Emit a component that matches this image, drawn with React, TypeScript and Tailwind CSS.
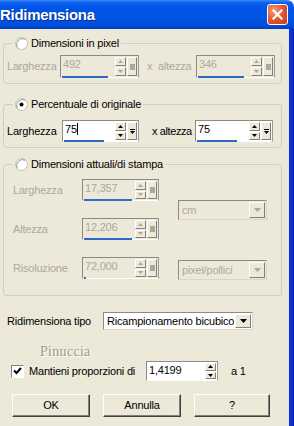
import React from "react";

const FONT = "font-['Liberation_Sans',Arial,sans-serif] text-[11px] tracking-[-0.2px] leading-none whitespace-nowrap";

function Tri({ up, color }: { up?: boolean; color: string }) {
  return (
    <svg width="5" height="3" viewBox="0 0 5 3">
      {up ? <path d="M2.5 0 L5 3 L0 3 Z" fill={color} /> : <path d="M0 0 L5 0 L2.5 3 Z" fill={color} />}
    </svg>
  );
}

function MiniBtn({ children, className }: { children?: React.ReactNode; className: string }) {
  return (
    <div
      className={`flex items-center justify-center bg-[#ece9d8] border border-t-white border-l-white border-b-[#808080] border-r-[#808080] ${className}`}
    >
      {children}
    </div>
  );
}

function Spinner({ disabled, className }: { disabled?: boolean; className: string }) {
  const c = disabled ? "#aca899" : "#000";
  return (
    <div className={`flex flex-col gap-[1px] ${className}`}>
      <MiniBtn className="flex-1">
        <Tri up color={c} />
      </MiniBtn>
      <MiniBtn className="flex-1">
        <Tri color={c} />
      </MiniBtn>
    </div>
  );
}

function NumEdit({
  value,
  disabled,
  bar,
  size,
  extra = true,
  caret,
}: {
  value: string;
  disabled?: boolean;
  bar: number;
  size: string;
  extra?: boolean;
  caret?: boolean;
}) {
  return (
    <div
      className={`relative flex items-stretch border border-t-[#8a8a8a] border-l-[#8a8a8a] border-r-[#9a9a9a] border-b-white ${
        disabled ? "bg-[#ece9d8]" : "bg-white"
      } ${size}`}
    >
      <div className={`flex-1 pl-[2px] pt-[3px] text-[11px] ${disabled ? "text-[#aca899]" : "text-black"} flex items-start`}>
        <span>{value}</span>
        {caret && <span className="w-[1px] h-[12px] mt-[-1px] bg-black" />}
      </div>
      <Spinner disabled={disabled} className="w-[11px] py-[1px] mr-[1px]" />
      {extra && (
        <MiniBtn className="w-[10px] my-[1px] mr-[1px] flex-col">
          {disabled ? (
            <div className="w-[5px] h-[6px] bg-[#aca899]" />
          ) : (
            <div className="flex flex-col items-center gap-[1px]">
              <div className="w-[5px] h-[1px] bg-black" />
              <Tri color="#000" />
            </div>
          )}
        </MiniBtn>
      )}
      {bar > 0 && (
        <div className="absolute left-[1px] bottom-[-1px] h-[2px] bg-[#316ac5]" style={{ width: bar }} />
      )}
    </div>
  );
}

function Radio({ checked }: { checked?: boolean }) {
  return (
    <svg width="13" height="13" viewBox="0 0 13 13">
      <circle cx="6.5" cy="6.5" r="6" fill="#ffffff" stroke="#c4c0b0" />
      <path d="M2.2 10.2 A6 6 0 0 1 10.2 2.2" fill="none" stroke="#9a9a8c" />
      {checked && <circle cx="6.5" cy="6.5" r="2" fill="#000" />}
    </svg>
  );
}

function Select({ value, disabled, size }: { value: string; disabled?: boolean; size: string }) {
  return (
    <div
      className={`flex items-stretch border border-t-[#8a8a8a] border-l-[#8a8a8a] border-r-[#d8d6cb] border-b-[#d8d6cb] ${
        disabled ? "bg-[#ece9d8] text-[#aca899]" : "bg-white text-black"
      } ${size}`}
    >
      <div className="flex-1 pl-[3px] flex items-center text-[11px] overflow-hidden">{value}</div>
      <MiniBtn className="w-[16px] m-[1px]">
        <svg width="7" height="4" viewBox="0 0 7 4">
          <path d="M0 0 L7 0 L3.5 4 Z" fill={disabled ? "#aca899" : "#000"} />
        </svg>
      </MiniBtn>
    </div>
  );
}

function Button({ label, size }: { label: string; size: string }) {
  return (
    <div
      className={`flex items-center justify-center bg-[#ece9d8] border border-t-white border-l-white border-b-[#404040] border-r-[#404040] shadow-[inset_-1px_-1px_0_#808080] text-[11px] text-black ${size}`}
    >
      {label}
    </div>
  );
}

function Legend({ label, checked, ml }: { label: string; checked?: boolean; ml: string }) {
  return (
    <legend className={`${ml} px-[2px] h-[14px] flex items-center gap-[3px] text-[11px] text-black`}>
      <Radio checked={checked} />
      <span>{label}</span>
    </legend>
  );
}

export default function App() {
  return (
    <div className={`w-[294px] h-[426px] flex flex-col overflow-hidden bg-white ${FONT}`}>
      <div className="h-[29px] shrink-0 flex items-center justify-between rounded-tr-[7px] bg-[linear-gradient(180deg,#3c8cf5_0%,#0a5ef0_10%,#0055e6_30%,#0054e3_60%,#0050dc_85%,#003fc6_100%)]">
        <span className="ml-0 text-white font-bold text-[15px] tracking-[-0.3px] [text-shadow:1px_1px_0_#0a2a8a]">
          Ridimensiona
        </span>
        <div className="mr-[6px] w-[21px] h-[21px] rounded-[3px] border border-white bg-[radial-gradient(circle_at_30%_30%,#f09a7c,#e0512c_55%,#c43c16)] flex items-center justify-center">
          <svg width="11" height="11" viewBox="0 0 11 11">
            <path d="M1.5 1.5 L9.5 9.5 M9.5 1.5 L1.5 9.5" stroke="#fff" strokeWidth="2.2" strokeLinecap="square" />
          </svg>
        </div>
      </div>
      <div className="flex-1 flex">
        <div className="w-[289px] bg-[#ece9d8] flex flex-col">
          {/* Group 1 */}
          <fieldset className="mt-[7px] ml-[3px] w-[279px] border border-[#d0d0bf] rounded-[3px] pl-[3px] pb-[5px]">
            <Legend label="Dimensioni in pixel" ml="ml-[6px]" />
            <div className="mt-[5px] flex items-center">
              <span className="w-[53px] text-[#aca899]">Larghezza</span>
              <NumEdit value="492" disabled bar={46} size="w-[79px] h-[23px]" />
              <span className="ml-[8px] w-[49px] text-[#aca899] whitespace-pre">x  altezza</span>
              <NumEdit value="346" disabled bar={46} size="w-[79px] h-[23px]" />
            </div>
          </fieldset>

          {/* Group 2 */}
          <fieldset className="mt-[13px] ml-[3px] w-[279px] border border-[#d0d0bf] rounded-[3px] pl-[3px] pb-[5px]">
            <Legend label="Percentuale di originale" checked ml="ml-[6px]" />
            <div className="mt-[9px] flex items-center">
              <span className="w-[55px] text-black">Larghezza</span>
              <NumEdit value="75" caret bar={40} size="w-[77px] h-[22px]" />
              <span className="ml-[13px] w-[43px] text-black tracking-[-0.4px]">x altezza</span>
              <NumEdit value="75" bar={40} size="w-[78px] h-[22px]" />
            </div>
          </fieldset>

          {/* Group 3 */}
          <fieldset className="mt-[9px] ml-[3px] w-[279px] border border-[#d0d0bf] rounded-[3px] pl-[9px] pb-[15px]">
            <Legend label="Dimensioni attuali/di stampa" ml="ml-0" />
            <div className="mt-[8px] flex">
              <div className="flex flex-col gap-[17px]">
                <div className="flex items-center">
                  <span className="w-[69px] text-[#aca899]">Larghezza</span>
                  <NumEdit value="17,357" disabled bar={48} size="w-[77px] h-[22px]" />
                </div>
                <div className="flex items-center">
                  <span className="w-[69px] text-[#aca899]">Altezza</span>
                  <NumEdit value="12,206" disabled bar={48} size="w-[77px] h-[22px]" />
                </div>
                <div className="flex items-center">
                  <span className="w-[69px] text-[#aca899]">Risoluzione</span>
                  <NumEdit value="72,000" disabled bar={2} size="w-[77px] h-[22px]" />
                </div>
              </div>
              <div className="ml-[19px] flex flex-col">
                <div className="mt-[21px]">
                  <Select value="cm" disabled size="w-[89px] h-[20px]" />
                </div>
                <div className="mt-[40px]">
                  <Select value="pixel/pollici" disabled size="w-[89px] h-[20px]" />
                </div>
              </div>
            </div>
          </fieldset>

          {/* Ridimensiona tipo */}
          <div className="mt-[16px] ml-[7px] flex items-center">
            <span className="w-[96px] text-black">Ridimensiona tipo</span>
            <Select value="Ricampionamento bicubico" size="w-[150px] h-[18px]" />
          </div>

          {/* Pinuccia watermark */}
          <div className="mt-[15px] ml-[40px] h-[14px] flex items-center font-['Liberation_Serif',serif] text-[14px] tracking-[0.3px] text-[#9c9a90] [text-shadow:1px_1px_0_#ffffff]">
            Pinuccia
          </div>

          {/* Checkbox row */}
          <div className="mt-[2px] ml-[11px] flex items-center h-[20px]">
            <div className="w-[13px] h-[13px] bg-white border border-t-[#808080] border-l-[#808080] border-b-white border-r-white flex items-center justify-center">
              <svg width="9" height="8" viewBox="0 0 9 8">
                <path d="M1 3.5 L3.5 6 L8 1" fill="none" stroke="#000" strokeWidth="2" />
              </svg>
            </div>
            <span className="ml-[5px] w-[117px] text-black">Mantieni proporzioni di</span>
            <NumEdit value="1,4199" bar={0} extra={false} size="w-[72px] h-[20px]" />
            <span className="ml-[13px] text-black">a 1</span>
          </div>

          {/* Buttons */}
          <div className="mt-[13px] ml-[12px] flex gap-[13px]">
            <Button label="OK" size="w-[78px] h-[23px]" />
            <Button label="Annulla" size="w-[78px] h-[23px]" />
            <Button label="?" size="w-[76px] h-[23px]" />
          </div>
        </div>
        <div className="w-[5px] bg-[#0831d9] border-r border-[#001b9e]" />
      </div>
    </div>
  );
}
